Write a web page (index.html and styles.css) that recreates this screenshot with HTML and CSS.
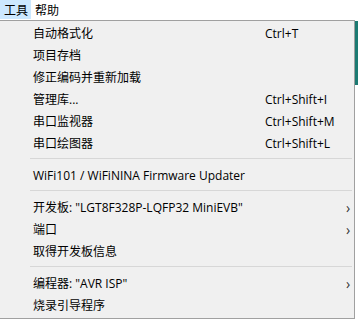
FILE: index.html
```html
<!DOCTYPE html>
<html lang="zh-CN">
<head>
    <meta charset="UTF-8">
    <meta name="viewport" content="width=device-width, initial-scale=1.0">
    <title>工具菜单</title>
    <link rel="stylesheet" href="styles.css">
</head>
<body>

<div class="menubar">
    <span class="menubar-item active">工具</span>
    <span class="menubar-item">帮助</span>
</div>

<div class="window-edge"></div>

<div class="popup">
    <div class="item"><span class="label">自动格式化</span><span class="key">Ctrl+T</span></div>
    <div class="item"><span class="label">项目存档</span></div>
    <div class="item"><span class="label">修正编码并重新加载</span></div>
    <div class="item"><span class="label">管理库...</span><span class="key">Ctrl+Shift+I</span></div>
    <div class="item"><span class="label">串口监视器</span><span class="key">Ctrl+Shift+M</span></div>
    <div class="item"><span class="label">串口绘图器</span><span class="key">Ctrl+Shift+L</span></div>
    <div class="sep"></div>
    <div class="item"><span class="label">WiFi101 / WiFiNINA Firmware Updater</span></div>
    <div class="sep"></div>
    <div class="item"><span class="label">开发板: "LGT8F328P-LQFP32 MiniEVB"</span><span class="arrow">&#x203A;</span></div>
    <div class="item"><span class="label">端口</span><span class="arrow">&#x203A;</span></div>
    <div class="item"><span class="label">取得开发板信息</span></div>
    <div class="sep"></div>
    <div class="item"><span class="label">编程器: "AVR ISP"</span><span class="arrow">&#x203A;</span></div>
    <div class="item"><span class="label">烧录引导程序</span></div>
</div>

</body>
</html>
```

FILE: styles.css
```css
body {
    margin: 0;
    padding: 0;
    background-color: #ffffff;
    font-family: "Open Sans", "Noto Sans CJK SC", sans-serif;
    font-size: 12px;
    color: #000;
    position: relative;
    overflow: hidden;
}

.menubar {
    display: flex;
    height: 20px;
    background: #ffffff;
}

.menubar-item {
    display: flex;
    align-items: center;
    padding: 0 3px 0 4px;
    height: 19px;
}

.menubar-item.active {
    background-color: #cce8ff;
}

.window-edge {
    position: absolute;
    left: 355px;
    top: 21px;
    width: 3px;
    height: 64px;
    background: #1c7a72;
}

.popup {
    width: 354px;
    background: #f0f0f0;
    border: 1px solid #a0a0a0;
    border-left: none;
    padding: 1px 0 2px;
}

.item {
    display: flex;
    align-items: center;
    height: 22px;
    padding-left: 33px;
}

.label {
    flex: 1;
}

.key {
    width: 89px;
}

.arrow {
    width: 8px;
    font-size: 14px;
    color: #333;
}

.sep {
    height: 1px;
    background: #d7d7d7;
    margin: 4px 2px 5px 30px;
}
```
